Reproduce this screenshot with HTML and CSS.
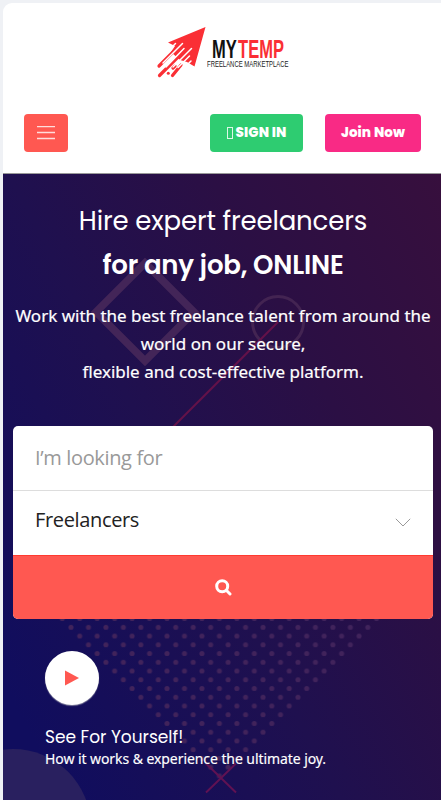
FILE: index.html
```
<!DOCTYPE html>
<html lang="en">
  <head>
    <meta charset="UTF-8" />
    <meta name="viewport" content="width=device-width, initial-scale=1.0" />
    <title>MyTemp Freelance Marketplace</title>
    <link rel="stylesheet" href="styles.css">
  </head>
  <body>
    <div class="page">
      <header class="header">
        <a class="logo" href="#">
          <svg width="140" height="60" viewBox="153 22 140 60">
            <path fill="#fa2f35" d="M205.500 27 L194.500 66.500 L187 62 L180 60 L171 52 L175 46 L168 42.500 Z" />
            <g stroke="#fa2f35" stroke-width="3.200" stroke-linecap="round">
              <path d="M174 51 L159 66 M180 55 L159.500 75.500 M181 65 L172.500 75.500 M175 66 L173 68" />
            </g>
            <circle cx="168.300" cy="73.300" r="1.500" fill="#fa2f35" />
            <g stroke="#fff" stroke-width="1.500" stroke-linecap="round">
              <path d="M175.500 43.500 L171 48 M182.500 43.500 L163 63 M184 48.500 L166 67 M191.500 48.500 L173 67 M189.500 56 L178 67.500 M191 61 L186 66" />
            </g>
          </svg>
          <span class="logo-text">
            <span class="logo-name">MY<b>TEMP</b></span>
            <span class="logo-sub">FREELANCE MARKETPLACE</span>
          </span>
        </a>
        <nav class="nav">
          <button class="btn menu-btn" aria-label="Menu">
            <svg width="18" height="14" viewBox="0 0 18 14" stroke="#fff" stroke-opacity="0.8" stroke-width="1.300">
              <path d="M0 0.500 H18 M0 6.500 H18 M0 12.500 H18" />
            </svg>
          </button>
          <button class="btn sign-in"><span class="glyph"></span><span>SIGN IN</span></button>
          <button class="btn join">Join Now</button>
        </nav>
      </header>

      <section class="hero">
        <!-- decorative shapes behind the content -->
        <svg class="shapes" width="438" height="626" viewBox="3 174 438 626" fill="none">
          <defs>
            <pattern id="dots" x="62.270" y="622.930" width="17.460" height="17.480" patternUnits="userSpaceOnUse">
              <g fill="#41235b">
                <circle cx="8.730" cy="4.370" r="2.500" />
                <circle cx="0" cy="13.110" r="2.500" />
                <circle cx="17.460" cy="13.110" r="2.500" />
              </g>
            </pattern>
          </defs>
          <path d="M145 263 L194 312 L145 361 L96 312 Z" stroke="#432558" stroke-width="7.500" />
          <circle cx="278" cy="322" r="25.500" stroke="#432452" stroke-width="3" />
          <path d="M278 322 L172 428" stroke="#641249" stroke-width="2" />
          <path d="M50 612 H388 L219 781 Z" fill="url(#dots)" />
          <circle cx="13" cy="827" r="78" fill="#29205f" />
          <path d="M206 792.500 L236 763.500 M206 763.500 L236 792.500" stroke="#601253" stroke-width="2" />
        </svg>

        <div class="hero-content">
          <h1 class="title"><span class="title-top">Hire expert freelancers</span><strong>for any job, ONLINE</strong></h1>
          <p class="lead">Work with the best freelance talent from around the<br>world on our secure,<br>flexible and cost-effective platform.</p>

          <form class="search">
            <div class="field placeholder">I’m looking for</div>
            <div class="field select">
              <span>Freelancers</span>
              <svg width="16" height="9" viewBox="0 0 16 9" fill="none" stroke="#999">
                <path d="M0.800 0.800 L8 8 L15.200 0.800" />
              </svg>
            </div>
            <button class="search-btn" type="button" aria-label="Search">
              <svg width="17" height="17" viewBox="0 0 17 17" fill="none" stroke="#fff" stroke-width="3">
                <circle cx="7.200" cy="7.200" r="5.500" />
                <path d="M11.300 11.300 L15 15" stroke-linecap="round" />
              </svg>
            </button>
          </form>

          <div class="video">
            <a class="play" href="#" aria-label="Play">
              <svg width="14" height="16" viewBox="0 0 14 16"><path fill="#ff5851" d="M0 0.500 L14 8 L0 15.500 Z" /></svg>
            </a>
            <h4 class="video-title">See For Yourself!</h4>
            <p class="video-text">How it works &amp; experience the ultimate joy.</p>
          </div>
        </div>
      </section>
    </div>
  </body>
</html>
```
FILE: styles.css
```
* {
  box-sizing: border-box;
}
body {
  margin: 0;
  padding: 3px 0 0 3px;
  background: #eff1f5;
  font-family: "Open Sans", "Noto Sans", sans-serif;
}
.page {
  height: 797px;
  overflow: hidden;
  border-top-left-radius: 9px;
  background: #fff;
}
.header {
  height: 171px;
  padding-top: 19px;
  border-bottom: 1px solid #999;
}
.logo {
  display: flex;
  width: 140px;
  height: 60px;
  margin-left: 150px;
  text-decoration: none;
}
.logo svg {
  flex: none;
}
.logo-text {
  flex: none;
  display: flex;
  flex-direction: column;
  margin: 16px 0 0 -86px;
  white-space: nowrap;
}
.logo-name {
  width: 110px;
  margin-left: 5px;
  font: bold 25px/22px "Liberation Sans", sans-serif;
  color: #111;
  transform: scaleX(0.66);
  transform-origin: left;
}
.logo-name b {
  margin-left: 2px;
  color: #fa2f35;
}
.logo-sub {
  width: 122px;
  font: 9px/9px "Liberation Sans", sans-serif;
  color: #222;
  transform: scaleX(0.66);
  transform-origin: left;
}
.nav {
  display: flex;
  align-items: center;
  padding: 32px 20px 0 21px;
}
.btn {
  display: flex;
  align-items: center;
  justify-content: center;
  height: 38px;
  padding: 0;
  border: none;
  border-radius: 4px;
  color: #fff;
  font: 800 13.5px Poppins, Inter, sans-serif;
  white-space: nowrap;
}
.menu-btn {
  width: 44px;
  margin-right: auto;
  background: #ff5851;
}
.sign-in {
  width: 93px;
  gap: 3px;
  margin-right: 22px;
  background: #2ecc71;
  letter-spacing: 0.1px;
}
.glyph {
  width: 6px;
  height: 12px;
  border: 1px solid #dcf7e7;
}
.join {
  width: 96px;
  background: #f92a85;
  letter-spacing: 0.1px;
}
.hero {
  position: relative;
  height: 626px;
  background: linear-gradient(62deg, #100d5e 8%, #1f104f 44%, #2b0f44 70%, #370f3d 100%);
  color: #fff;
}
.shapes {
  position: absolute;
  top: 0;
  left: 0;
}
.hero-content {
  position: relative;
  padding: 25px 8px 0 10px;
}
.title {
  margin: 0;
  font: 400 26px/44px Poppins, Inter, sans-serif;
  text-align: center;
  white-space: nowrap;
}
.title span,
.title strong {
  display: block;
}
.title-top {
  letter-spacing: -0.15px;
}
.title strong {
  font-weight: 600;
  letter-spacing: -0.2px;
}
.lead {
  margin: 15px 0 0;
  font: 400 17px/28px "Noto Sans", sans-serif;
  -webkit-text-stroke: 0.2px #fff;
  text-align: center;
  white-space: nowrap;
}
.search {
  margin-top: 40px;
  overflow: hidden;
  border-radius: 5px;
  background: #fff;
}
.field {
  display: flex;
  align-items: center;
  height: 64px;
  padding: 0 22px;
  font-size: 20px;
  letter-spacing: -0.35px;
  color: #222;
}
.field.placeholder {
  height: 65px;
  padding-bottom: 2px;
  border-bottom: 1px solid #ddd;
  color: #999;
}
.select {
  justify-content: space-between;
  padding-bottom: 8px;
}
.select svg {
  margin-top: 7px;
}
.search-btn {
  display: flex;
  align-items: center;
  justify-content: center;
  width: 100%;
  height: 64px;
  padding: 0;
  border: none;
  border-top: 1px solid #ff3a30;
  background: #ff5851;
}
.video {
  padding: 32px 0 0 32px;
}
.play {
  display: flex;
  align-items: center;
  justify-content: center;
  width: 54px;
  height: 54px;
  border-radius: 50%;
  background: #fff;
  box-shadow: 0 1px 1px rgba(200, 200, 200, 0.6);
}
.video-title {
  margin: 20px 0 0;
  font: 400 17px/24px Poppins, Inter, sans-serif;
}
.video-text {
  margin: 0;
  font: 400 14px/20px "Noto Sans", sans-serif;
  letter-spacing: -0.07px;
  -webkit-text-stroke: 0.15px #fff;
}
```
